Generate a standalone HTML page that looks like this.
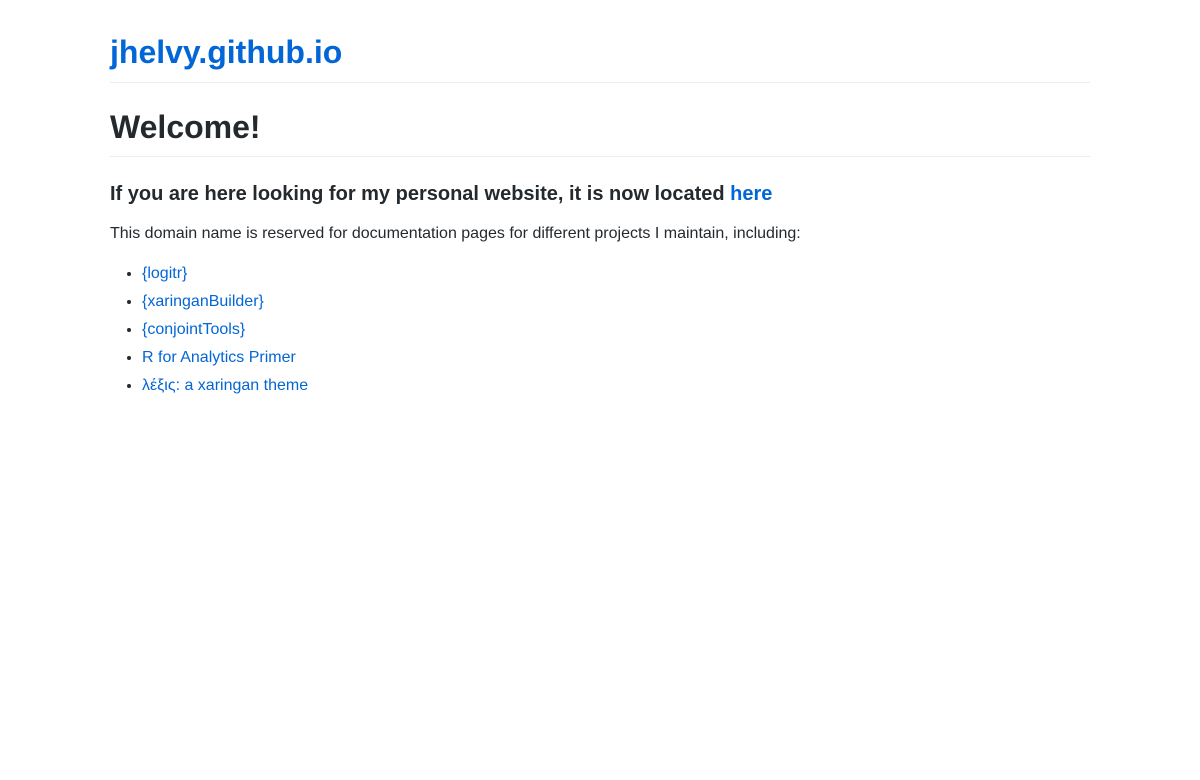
<!DOCTYPE html>
<html><head><meta charset="utf-8"><style>
body{margin:0;background:#fff;font-family:"Liberation Sans",sans-serif;font-size:16px;line-height:1.5;color:#24292e;}
.c{width:980px;margin:0 auto;padding-top:32px;}
a{color:#0366d6;text-decoration:none}
.t{font-size:32px;font-weight:600;line-height:1.25;padding-bottom:10px;border-bottom:1px solid #eaecef;margin:0}
h1{font-size:32px;font-weight:600;line-height:1.25;margin:24px 0 16px;padding-bottom:9px;border-bottom:1px solid #eaecef}
h3{font-size:20px;font-weight:600;line-height:1.25;margin:25px 0 15px}
p{margin:0 0 16px}
ul{margin:0;padding-left:32px}
li{margin-top:4px}
</style></head><body><div class="c">
<div class="t"><a href="#">jhelvy.github.io</a></div>
<h1>Welcome!</h1>
<h3>If you are here looking for my personal website, it is now located <a href="#">here</a></h3>
<p>This domain name is reserved for documentation pages for different projects I maintain, including:</p>
<ul>
<li><a href="#">{logitr}</a></li>
<li><a href="#">{xaringanBuilder}</a></li>
<li><a href="#">{conjointTools}</a></li>
<li><a href="#">R for Analytics Primer</a></li>
<li><a href="#">λέξις: a xaringan theme</a></li>
</ul>
</div></body></html>
